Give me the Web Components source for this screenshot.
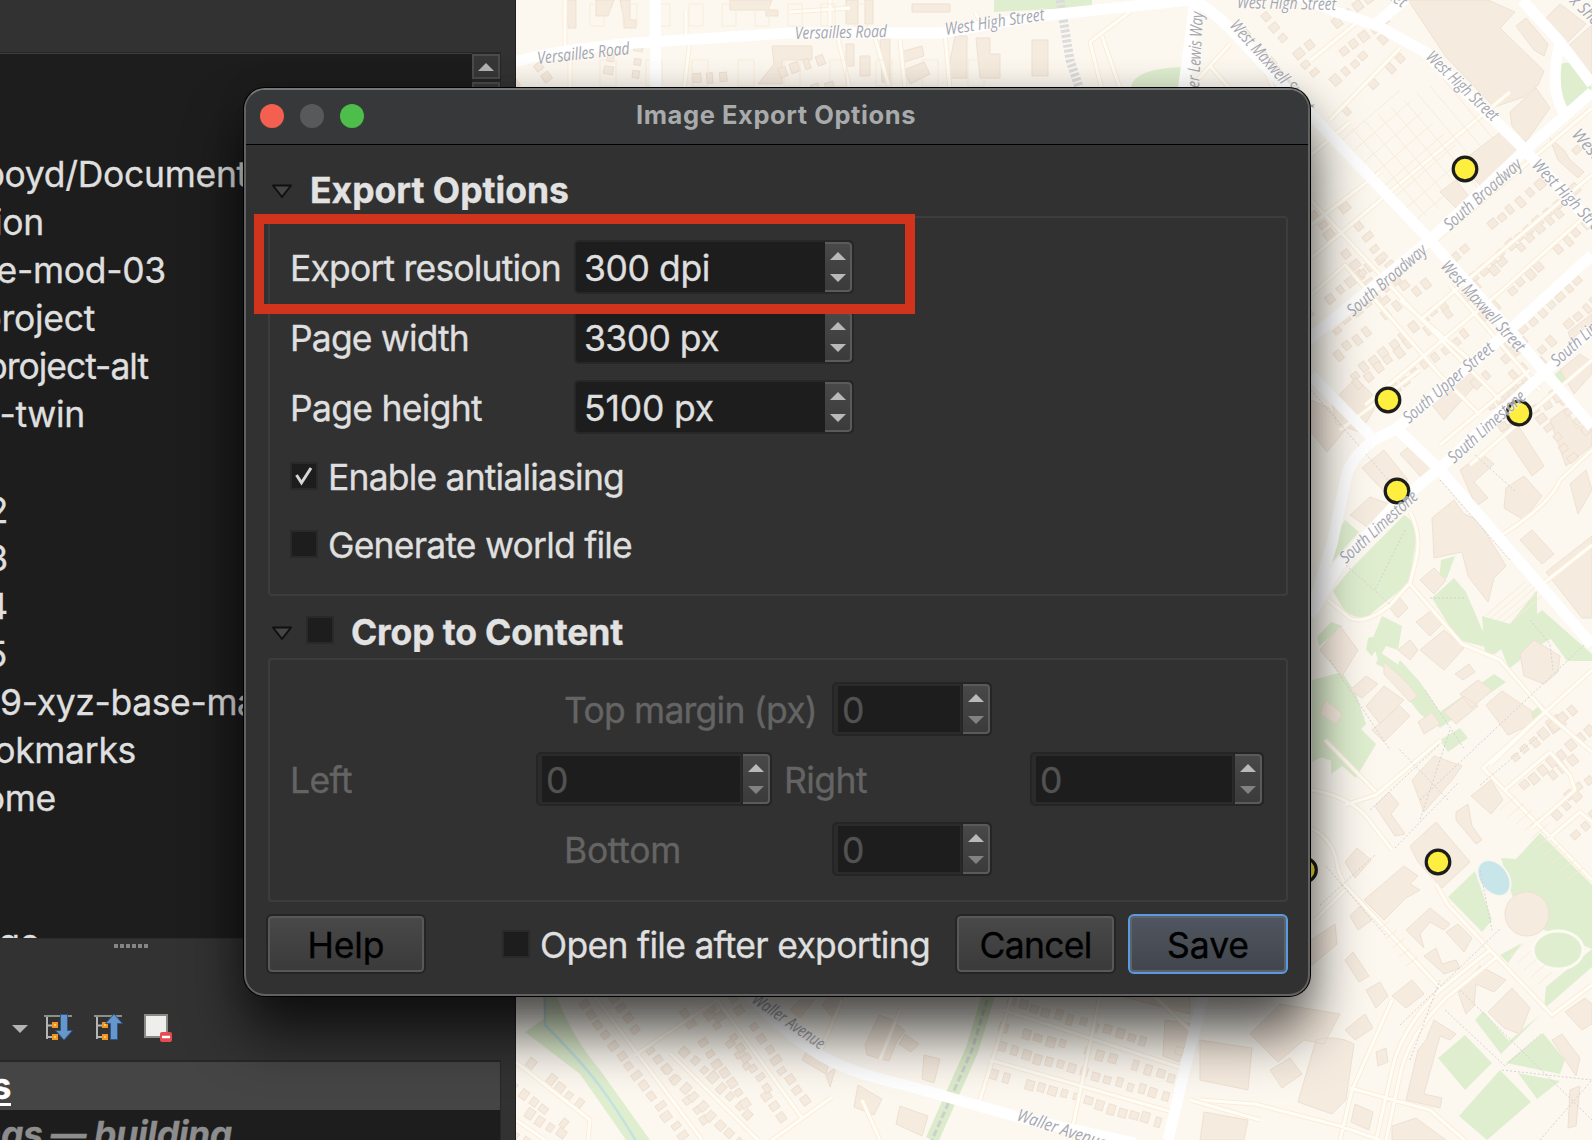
<!DOCTYPE html>
<html lang="en">
<head>
<meta charset="utf-8">
<title>Image Export Options</title>
<style>
  html, body { margin: 0; height: 100%; }
  body { width: 1592px; height: 1140px; overflow: hidden; display: flex; position: relative;
    background: #323232; font-family: Inter, "Liberation Sans", sans-serif; font-size: 35.5px; color: #dfdfdf; }
</style>
</head>
<body>
<side-panel></side-panel>
<street-map></street-map>
<export-dialog></export-dialog>
<script>
const define = (name, html, setup) => customElements.define(name, class extends HTMLElement {
  connectedCallback() {
    if (this.shadowRoot) return;
    const root = this.attachShadow({ mode: 'open' });
    root.innerHTML = html;
    if (setup) setup.call(this, root);
  }
});

/* Text run tracked out or in to a given advance width (attribute w) */
define('fit-text', `<style>
  :host { display: inline-block; white-space: pre; line-height: 44px; padding-top: 4px; flex: none; letter-spacing: -.3px;
    -webkit-text-stroke: .35px currentColor; }
</style><span><slot></slot></span>`, function (root) {
  const w = +this.getAttribute('w'), n = this.textContent.length;
  if (!w) return;
  const span = root.querySelector('span');
  span.style.letterSpacing = '0px';
  span.style.letterSpacing = ((w - span.getBoundingClientRect().width) / n).toFixed(3) + 'px';
});

define('check-box', `<style>
  :host { display: block; box-sizing: border-box; width: 28px; height: 28px; flex: none;
    background: #1d1d1d; border: 2px solid #292929; }
  svg { display: none; width: 24px; height: 24px; }
  :host([checked]) svg { display: block; }
</style><svg viewBox="0 0 24 24"><path d="M4.5 11l5 7.8L19 4" fill="none" stroke="#d6d6d6" stroke-width="3"/></svg>`);

define('spin-box', `<style>
  :host { display: flex; box-sizing: border-box; height: 54px; width: 280px; flex: none;
    border: 2px solid #272727; border-radius: 5px; background: #1d1d1d; overflow: hidden; }
  .value { flex: 1; display: flex; align-items: center; padding-left: 8px; }
  .steps { width: 27px; box-sizing: border-box; display: flex; flex-direction: column; align-items: center;
    justify-content: center; gap: 14px; background: linear-gradient(#484848,#3b3b3b);
    border: 2px solid #5a5a5a; border-left: 0; border-radius: 0 4px 4px 0; }
  svg { display: block; width: 16px; height: 8px; }
  :host([disabled]) { height: 54px; color: #525252; background: #2b2b2b; border-color: #252525; }
  :host([disabled]) .value { margin: 2px 3px 2px 4px; background: #1d1d1d; padding-left: 4px; border: 0; }
  :host([disabled]) .steps { border-left: 0; box-shadow: -2px 0 #262626; }
  :host([disabled]) .down { opacity: .55; }
</style>
<div class="value"><slot></slot></div>
<div class="steps"><svg viewBox="0 0 16 8"><path d="M0 8L8 0l8 8z" fill="#b9b9b9"/></svg>
<svg class="down" viewBox="0 0 16 8"><path d="M0 0h16L8 8z" fill="#b9b9b9"/></svg></div>`);

define('push-button', `<style>
  :host { display: flex; box-sizing: border-box; height: 60px; align-items: center; justify-content: center;
    flex: none; color: #000; border: 2px solid #252525; border-radius: 6px;
    box-shadow: inset 0 0 0 2px #585858; background: linear-gradient(#494949,#3a3a3a); }
  :host([primary]) { border-color: #5b9ade; background: linear-gradient(#505660,#41454d); box-shadow: inset 0 0 0 2px #5d636c; }
</style><slot></slot>`);

define('disclosure-arrow', `<style>:host { display: block; width: 22px; height: 15px; flex: none; } svg { display: block; }</style>
<svg width="22" height="15" viewBox="0 0 22 15"><path d="M2 1.5h18L11 13z" fill="#454545" stroke="#101010" stroke-width="2" stroke-linejoin="round"/></svg>`);

define('group-box', `<style>
  :host { display: flex; flex-direction: column; box-sizing: border-box; border: 2px solid #3d3d3d;
    border-radius: 4px; padding: 22px 20px 0; }
</style><slot></slot>`);

define('export-dialog', `<style>
  :host { position: absolute; left: 244px; top: 88px; width: 1066px; height: 908px; box-sizing: border-box;
    display: flex; flex-direction: column; background: #313131; border: 2px solid #616161; border-top-color: #767878;
    border-radius: 21px; box-shadow: 0 0 0 1px #000, 0 36px 56px rgba(0,0,0,.7), 0 0 30px rgba(0,0,0,.12); }
  header { height: 54px; display: flex; align-items: center; border-bottom: 1px solid #000; flex: none;
    background: #363839; border-radius: 19px 19px 0 0; }
  .lights { display: flex; gap: 16px; padding-left: 14px; width: 378px; box-sizing: border-box; margin-top: -2px; }
  .lights i { width: 24px; height: 24px; border-radius: 50%; flex: none; }
  header fit-text { font-size: 25.5px; font-weight: 700; color: #a9aaab; margin-top: -9px; -webkit-text-stroke: 0; }
  main { display: flex; flex-direction: column; padding: 0 20px 0 22px; }
  h2 { margin: 0; font-size: 35.5px; font-weight: 700; display: flex; align-items: center; padding-left: 3px; color: #e2e2e2; }
  h2 disclosure-arrow { margin-top: 2px; }
  .row { display: flex; align-items: center; height: 52px; }
  .check { display: flex; align-items: center; height: 28px; gap: 10px; }
  .off { height: 54px; color: #646464; }
  .off + .off { margin-top: 16px; }
  footer { display: flex; align-items: center; margin-top: 12px; height: 60px; margin-left: -2px; }
  .mark { position: absolute; left: 8px; top: 124px; width: 661px; height: 100px; box-sizing: border-box; border: 10px solid #d1341c; }
</style>
<header><div class="lights"><i style="background:#f4604f"></i><i style="background:#58595b"></i><i style="background:#4ebe4a"></i></div>
<fit-text w="280" style="padding-left:12px">Image Export Options</fit-text></header>
<main>
  <h2 style="margin-top:28px;height:35px"><disclosure-arrow></disclosure-arrow><fit-text w="259" style="margin:-3px 0 0 17px">Export Options</fit-text></h2>
  <group-box style="height:380px;margin-top:8px">
    <div class="row" style="margin-top:1px"><fit-text w="271" style="margin-right:13px">Export resolution</fit-text><spin-box><fit-text w="126">300 dpi</fit-text></spin-box></div>
    <div class="row" style="margin-top:18px"><fit-text w="179" style="margin-right:105px">Page width</fit-text><spin-box><fit-text w="135">3300 px</fit-text></spin-box></div>
    <div class="row" style="margin-top:18px"><fit-text w="192" style="margin-right:92px">Page height</fit-text><spin-box><fit-text w="130">5100 px</fit-text></spin-box></div>
    <div class="check" style="margin-top:29px"><check-box checked></check-box><fit-text w="296">Enable antialiasing</fit-text></div>
    <div class="check" style="margin-top:40px"><check-box></check-box><fit-text w="304">Generate world file</fit-text></div>
  </group-box>
  <h2 style="margin-top:20px;height:28px"><disclosure-arrow style="margin-top:6px"></disclosure-arrow><check-box style="margin-left:13px"></check-box><fit-text w="272" style="margin-left:17px;padding-top:5px">Crop to Content</fit-text></h2>
  <group-box style="height:244px;margin-top:14px">
    <div class="row off"><fit-text w="253" style="margin:0 15px 0 274px">Top margin (px)</fit-text><spin-box disabled style="width:160px"><fit-text>0</fit-text></spin-box></div>
    <div class="row off"><fit-text w="62" style="margin-right:184px">Left</fit-text><spin-box disabled style="width:236px"><fit-text>0</fit-text></spin-box>
      <fit-text w="83" style="margin:0 163px 0 12px">Right</fit-text><spin-box disabled style="width:234px"><fit-text>0</fit-text></spin-box></div>
    <div class="row off"><fit-text w="117" style="margin:0 151px 0 274px">Bottom</fit-text><spin-box disabled style="width:160px"><fit-text>0</fit-text></spin-box></div>
  </group-box>
  <footer><push-button style="width:160px"><fit-text w="77">Help</fit-text></push-button>
    <check-box style="margin-left:76px"></check-box><fit-text w="390" style="margin-left:10px;margin-right:25px">Open file after exporting</fit-text>
    <push-button style="width:161px"><fit-text w="112">Cancel</fit-text></push-button>
    <push-button primary style="width:160px;margin-left:12px"><fit-text w="82">Save</fit-text></push-button></footer>
</main>
<div class="mark"></div>`);

/* Tree row: text is right-aligned to its visible end, the start runs off the panel */
define('tree-row', `<style>:host { display: flex; justify-content: flex-end; align-items: center; height: 48px; flex: none; }</style><slot></slot>`);

define('side-panel', `<style>
  :host { display: flex; flex-direction: column; width: 516px; height: 1140px; flex: none; box-sizing: border-box;
    border-right: 1px solid #1f1f1f; overflow: hidden; background: #323232; }
  .browser { margin-top: 52px; height: 887px; width: 501px; box-sizing: border-box; border: 1px solid #272727; border-left: 0;
    border-bottom-color: #2c2c2c; background: #1d1d1d; display: flex; justify-content: space-between; overflow: hidden; flex: none; box-shadow: inset 0 1px #3c3c3c; }
  .tree { display: flex; flex-direction: column; align-items: flex-start; padding-top: 96px; width: 0; }
  .bar { width: 28px; display: flex; flex-direction: column; gap: 3px; background: #262626; padding-top: 1px; }
  .bar div { height: 25px; box-sizing: border-box; border: 2px solid #4b4b4b; background: #373737; display: flex; align-items: center; justify-content: center; flex: none; }
  .grip { display: flex; gap: 2px; padding: 5px 0 0 114px; height: 4px; flex: none; }
  .grip i { width: 4px; height: 4px; background: #858585; }
  .tools { display: flex; align-items: flex-start; padding: 63px 0 0 12px; height: 49px; flex: none; }
  .tools svg { display: block; flex: none; }
  .layers { width: 501px; flex: 1; box-sizing: border-box; background: #1d1d1d; border-top: 2px solid #272727; border-right: 1px solid #272727; overflow: hidden; }
  .sel { background: #454545; color: #fff; font-weight: 700; height: 48px; display: flex; }
  .sel fit-text { height: 40px; line-height: 42px; padding-top: 0; box-sizing: border-box; border-bottom: 3px solid #fff; margin-top: -2px; }
  .sel tree-row { height: 50px; }
</style>
<div class="browser"><div class="tree">
  <tree-row style="width:266px"><fit-text>boyd/Documents</fit-text></tree-row>
  <tree-row style="width:44px"><fit-text>ion</fit-text></tree-row>
  <tree-row style="width:166px"><fit-text>e-mod-03</fit-text></tree-row>
  <tree-row style="width:95px"><fit-text>project</fit-text></tree-row>
  <tree-row style="width:148px"><fit-text w="162">project-alt</fit-text></tree-row>
  <tree-row style="width:85px"><fit-text>-twin</fit-text></tree-row>
  <tree-row style="width:0"></tree-row>
  <tree-row style="width:8px"><fit-text>2</fit-text></tree-row>
  <tree-row style="width:8px"><fit-text>3</fit-text></tree-row>
  <tree-row style="width:8px"><fit-text>4</fit-text></tree-row>
  <tree-row style="width:7px"><fit-text>5</fit-text></tree-row>
  <tree-row style="width:278px"><fit-text w="278">9-xyz-base-map</fit-text></tree-row>
  <tree-row style="width:136px"><fit-text>okmarks</fit-text></tree-row>
  <tree-row style="width:56px"><fit-text>ome</fit-text></tree-row>
  <tree-row style="width:0"></tree-row>
  <tree-row style="width:0"></tree-row>
  <tree-row style="width:40px"><fit-text>ge</fit-text></tree-row>
</div>
<div class="bar"><div><svg width="16" height="8" viewBox="0 0 16 8"><path d="M0 8L8 0l8 8z" fill="#b4b4b4"/></svg></div><div style="height:60px"></div></div></div>
<div class="grip"><i></i><i></i><i></i><i></i><i></i><i></i></div>
<div class="tools">
  <svg width="16" height="32" viewBox="0 0 16 32"><path d="M0 14h16l-8 8z" fill="#b4b4b4"/></svg>
  <svg width="32" height="32" viewBox="0 0 32 32" style="margin-left:16px"><path d="M0 5h28" stroke="#8b8f88" stroke-width="2"/><path d="M3 6v22M3 14.500h6M3 26h6" stroke="#b5b5b5" stroke-width="2" fill="none"/><path d="M8 11h6v6H8zM8 23h6v6H8z" fill="#f29424"/><path d="M10 13h2v2h-2zM10 25h2v2h-2z" fill="#ffd34e"/><path d="M16.500 3.500h7v16h5L20 29l-8.500-9.500h5z" fill="#6796cb" stroke="#2f5687"/></svg>
  <svg width="32" height="32" viewBox="0 0 32 32" style="margin-left:18px"><path d="M0 5h28" stroke="#8b8f88" stroke-width="2"/><path d="M3 6v22M3 14.500h6M3 26h6" stroke="#b5b5b5" stroke-width="2" fill="none"/><path d="M8 11h6v6H8zM8 23h6v6H8z" fill="#f29424"/><path d="M10 13h2v2h-2zM10 25h2v2h-2z" fill="#ffd34e"/><path d="M16.500 28.500h7v-16h5L20 3l-8.500 9.500h5z" fill="#6796cb" stroke="#2f5687"/></svg>
  <svg width="32" height="32" viewBox="0 0 32 32" style="margin-left:18px"><path d="M1 4h22v22H1z" fill="#eeeeec" stroke="#888a85" stroke-width="2"/><rect x="16" y="21" width="12" height="10" rx="2" fill="#e54b50"/><path d="M18 26h8" stroke="#fff" stroke-width="2.500"/></svg>
</div>
<div class="layers">
  <div class="sel"><tree-row style="width:11px"><fit-text>s</fit-text></tree-row></div>
  <tree-row style="width:232px;height:46px;color:#8d8d8d;font-weight:700;font-style:italic"><fit-text>ngs — building</fit-text></tree-row>
</div>`);

define('street-map', `<style>:host { display: block; width: 1076px; height: 1140px; flex: none; } svg { display: block; }
  .g { fill: #dfeecf; } .b, .h { fill: #f6ebdf; stroke: #efe1d2; stroke-width: 1; }
  .r { fill: none; stroke: #fff; stroke-width: 11; stroke-linejoin: round; }
  .c { fill: none; stroke: #fbedd6; stroke-width: 5; stroke-linejoin: round; } .m { fill: none; stroke: #fffdf8; stroke-width: 3; stroke-linejoin: round; }
  .d { fill: none; stroke: #d4d2d2; stroke-width: 1; stroke-dasharray: 2 2; }
  .l { fill: none; stroke: #f8ecd9; stroke-width: 1; }
  text { font: italic 17px "Open Sans", "Noto Sans", sans-serif; fill: #a3a7b1; stroke: #fffdfa; stroke-width: 2; paint-order: stroke; stroke-opacity: .6; }
</style>
<svg width="1076" height="1140" viewBox="516 0 1076 1140">
<rect x="516" width="1076" height="1140" fill="#fcf8f0"/>
<g class="g">
 <path d="M994 0h98v7l-98 5zM1131 87q3-18 50-20v20z"/>
 <path d="M1561 64q9-4 17 4l14 20-26 24q-12-24-5-48zM1553 376l9-8 7 9-10 8z"/>
 <path d="M1345 520l14 12-20 22-10 12 8-34zM1404 515q14 8 12 26l-7 42-42 34q-18 2-26-12l-8-14 14-18zM1317 637l14-15 12 4-24 20z"/>
 <path d="M1441 560l14-4-8 22-8 2zM1432 598l22-20 12 14 24 56-32-8zM1482 616l28 8 27-34v32l-42 32h-10zM1500 646l42-36 50 44v7h-25l-16-22-15 8-27 22zM1518 722l24-18 4 6-20 16z"/>
 <path d="M1368 638q12-4 12 6l-8 12-6-6zM1382 616l20 10-4 24-12-4-8 14-6-20zM1312 680l30-8 14 22 10 30-14 14-20-16-20-4zM1400 660l20 22 20 30 54-38 12 8-66 46-20-14-28-36zM1380 652l20 14-4 8-20-10zM1312 712l40 8 24 24-20 34-16-14-28-10z"/>
 <path d="M1312 740l30 14 20-10-8 30-22-22-20 10zM1440 740l20-12 8 10-20 14z"/>
 <path d="M1448 897l27-26 17 49-10 12zM1501 858l15 1 24-26 52 52v82l-48 42 2-22 46-38-60-24-20-30zM1500 955l22-12-14 20z"/>
 <path d="M1483 1011l26 30 32-27-40 40-26-34zM1438 1058l27-23 27 28-27 27zM1506 1063l37-30 22 27-5 14zM1518 1073l42 8-23 18zM1500 1070l31 32-44 38-28-24z"/>
 <path d="M543 997l14-1q14 40 43 74l50 70h-24l-46-66-55-42 20-14zM1331 760l10-4 4 8-14 10z"/>
</g>
<path d="M990 990L972 1050 932 1140" fill="none" stroke="#dcebcb" stroke-width="13"/>
<path d="M545 995v30q36 36 54 60t37 56" fill="none" stroke="#c3e2e0" stroke-width="2.500"/>
<g class="b">
 <path d="M1408 0h80l27 12-15 16 44 43-6 14-14 12-30 10-48-50zM1516 26l10-8 22 26-4 12-10-6zM1510 112l26-24 14 20-24 34-14-16zM1542 22l18-18 26 20-20 20zM1569 45l23-20v60z"/>
 <path d="M1470 155l32-24 20 20-40 36-14-14zM1440 192l16-12 14 18-8 16zM1550 138l14 12 6 10 14 12-6 6-20-18-4-10zM1560 370l20-16 12 8v12l-18 20z"/>
 <path d="M1428 400l36-34 16 14-36 40zM1568 332l24-18v18l-18 16zM1332 402l24-24 18 18v14l-14 22-24-8zM1311 400l18 8 16 22-18 22-16-20zM1362 468l22-18 24 30-16 20zM1400 454l12-10 20 24-10 10z"/>
 <path d="M1350 515l20-18 22 8-22 24zM1432 518l22-18 10 14 14 6 28 46-12 12-6 24-20-26-6-24-28 6zM1460 470l22-16 12 10-20 18 14 16-12 8zM1500 428l16-6 28 44-12 10zM1506 488l18-12 18 20-18 24-20-12zM1550 420l16-12 10 20 16-8v26l-26 20zM1570 484l16-14 6 20-14 24zM1520 540l12-10 22 24-12 10zM1546 572l46-36v82h-10z"/>
 <path d="M1420 580l14-12 12 12-12 14zM1388 606l12-8 8 10-10 10zM1416 622l16-12 12 12-14 14zM1320 650l20-24 18 24-16 26zM1420 650l24-20 20 18-20 22zM1398 650l12-10 8 10-8 10zM1455 674l14-10 6 8-12 8zM1520 654l14-14 26 16-2 16-14 12-20-8zM1350 690l16-14 12 8-16 14zM1384 662l20 18 14 16-8 6-26-28zM1460 694l18-14 14 10-20 18zM1486 705l16-14 30 20 2 12-26 12zM1366 706l18-20 20 14-24 24zM1444 712l20-16 14 10-22 18zM1372 730l28-24 10 10-26 26zM1418 722l14-10 8 12-16 10zM1326 700l16 14-6 10-16-10zM1545 722l12-8 10 10-14 10z"/>
 <path d="M1412 780l22-24 28 10-10 14-28 32zM1471 796l20-16 12 20-12 14zM1456 812l12-8 4 22 10 14-6 4-20-24zM1375 806l14-14 10 12-8 10 14 20-10 2zM1410 846l26-24 34 40-28 26-24-26zM1364 900l40-34 14 10-8 8 10 6-14 8-22 22zM1345 862l12-14 14 12-16 18zM1350 916l10-10 12 14-14 10zM1406 930l24-22 20 16-6 6-14-8-10 12 4 14zM1424 956l12-8 6 16 14-4 4 8-16 6zM1446 932l12-8 14 14-8 14zM1345 960l8-8 16 24-10 6zM1392 996l20-16 12 14-18 14zM1366 990l14-8 8 14-12 12zM1458 992l22-26 26 14-12 12-18-8-2 22-8 8zM1488 1012l24-24 18 20-10 26-16-6zM1565 1012l20-14 7 6v20l-10 6zM1311 940l24-16 2 20-26 22zM1552 1040l10-6 18 24-4 18zM1570 1090l10-4-4 40-8 2z"/>
 <path d="M1426 1040l8-20 22 14-6 6-10-4-16 58 18 4-2 10-34-8 12-50zM1316 1040q20-6 38 4l-8 56-14 14-34-12zM1250 1034l30-30 60 10-16 30-20-4-26 22zM1200 1040l52 8-4 42-48-10zM1204 1112l44 8-4 20h-44zM1355 1104l18 8-4 18-18-8zM1392 1126l24-8 30 22h-54zM1270 1070l20-12 12 16-20 14zM1376 1052l10-4 2 14-10 4zM1345 1030l20-16 8 14-18 12z"/>
 <path d="M620 0h10v20h6v8h-12v-8zM596 0h18l-6 16h-12zM566 0h10v28h-8zM730 0h42l-4 10h10v6h-12v-6h-36zM846 0h12v24h-12zM865 0h8v24h-8zM772 46h40v14h-30v24h-24l16-20zM912 4h38v8h-38zM976 38h14v16h10v24h-20zM955 36h12v42h-20l4-22zM1032 40h16v36h-16zM880 40l10-2v44h-8zM904 70l20-8 6 12-20 10zM900 52l22-6 2 10-20 6zM846 44h8v22h-8zM860 56h10v20h-10z"/>
 <path d="M865 1045l14-30 12 4 14 12-8 10-8 20-22-6zM800 1000h14l-14 18-10-8zM822 1005l14-14 8 6-12 20zM905 1034l14 10-8 8-12-8zM806 1052l22 14-2 8-24-14zM924 1055l16 4-6 24-12-4zM826 1075l10-8-6 20zM858 1085l24 14-8 16-20-8zM900 1106l28 10-6 20-26-12zM1165 1020l28 4-14 38-16-6zM1130 992h60v22l-70-18z"/>
</g>
<circle cx="1527" cy="914" r="22" class="b"/><ellipse cx="1558" cy="950" rx="25" ry="19" fill="#dfeecf" stroke="#fdfaf3" stroke-width="3"/>
<ellipse cx="1494" cy="878" rx="14" ry="20" transform="rotate(-38 1494 878)" fill="#c8e6ea" stroke="#f9f6f0" stroke-width="2"/>
<g id="houses"></g>
<g id="minor"></g>
<g class="d"><path d="M1311 390l90 105M1440 480l70 80M1475 455l40 36M1370 810l70-66M1395 848l64-66M1420 800l180-170M1450 730l-30 90M1385 935l-60-70M1400 1025l100-96M1460 990l132 130M1540 1140l52-60M1410 1060l30-80M1448 800l-50-52M1340 560l50 44M1480 520l60 60M1540 735l-60 50M1320 905l55-50M1480 870l12 60M1502 1070l90 10M1445 1010l60 56 36-32M1425 690l40 60M1330 660l60 90M1530 620l20 24 3 26M1405 530l-30 60M1430 598h35"/></g>
<path d="M1060 0l10 60 10 30" fill="none" stroke="#dcdcdc" stroke-width="9" stroke-dasharray="3 2"/>
<path d="M990 990L972 1050 932 1140" fill="none" stroke="#cfd0ce" stroke-width="3" stroke-dasharray="7 3"/>
<g class="r">
 <path d="M510 63q60-16 140-21t140-9h150l100-17 150-16M655 0l1 100M1182 100L1195 0M1190 0q20 4 60 50l62 66 118 124 115 132 47 55M1296-6l40 18 42 14 47 26 100 98 67 74M1376 24l30-26M1592 92l-26 23-41 35-95 90-90 74-32 26M1522 0l38 42 32 42M1560 42q-12 50 6 73M1592 255l-92 84-104 90-22 11q-24 18-28 38l-14 66-22 72M1311 375l64 66M1396 428l44 42 152 175M1592 330l-47 42-105 96-44 36-58 62-28 50"/>
 <path d="M745 990q40 44 75 65 30 18 85 30l120 34 110 24M1205 990l-18 70-19 80"/>
</g>
<g id="pins" fill="#fdee3f" stroke="#1d1d1b" stroke-width="3.200"></g>
<g id="labels"></g>
</svg>`, function (root) {
  const ns = 'http://www.w3.org/2000/svg';
  let seed = 7;
  const rnd = () => (seed = (seed * 16807) % 2147483647) / 2147483647;
  const add = (parent, tag, attrs, text) => {
    const e = document.createElementNS(ns, tag);
    for (const k in attrs) e.setAttribute(k, attrs[k]);
    if (text) e.textContent = text;
    parent.appendChild(e);
  };
  const houses = root.getElementById('houses'), minor = root.getElementById('minor');

  /* Rows of small houses along both sides of a street: x0, y0, x1, y1, offset */
  const row = (x0, y0, x1, y1, off = 12, s = 8) => {
    const len = Math.hypot(x1 - x0, y1 - y0), a = Math.atan2(y1 - y0, x1 - x0);
    for (let t = s; t < len - s / 2; t += s + 3 + rnd() * 3) for (const side of [-1, 1]) {
      if (rnd() < .12) continue;
      const o = side * (off + rnd() * 3), w = s * (.7 + rnd() * .4), h = s * (.8 + rnd() * .5);
      const cx = x0 + Math.cos(a) * t - Math.sin(a) * o, cy = y0 + Math.sin(a) * t + Math.cos(a) * o;
      add(houses, 'rect', { class: 'h', x: -w / 2, y: -h / 2, width: w, height: h,
        transform: `translate(${cx.toFixed(1)} ${cy.toFixed(1)}) rotate(${(a * 57.3).toFixed(1)})` });
    }
  };
  [[590,990,702,1140],[670,1055,755,1140],[717,1000,800,1118],[516,1070,580,1120],[1000,1012,1180,1066],[990,1058,1170,1112],
   [516,1120,560,1150],[690,1000,760,1100],[1311,60,1390,0],[1330,105,1395,45],[1592,155,1450,280],[1592,200,1470,310],
   [1592,285,1490,378],[1311,330,1400,260],[1340,370,1440,290],[1360,400,1460,320],[1480,400,1540,345],[1320,200,1400,300],
   [1250,20,1311,90],[1555,790,1592,760],[1560,830,1592,800],[1510,780,1592,710],[540,92,516,60],[690,92,740,88],
   [620,80,626,40],[780,88,830,70],[1540,395,1592,460],[1490,420,1560,380]].forEach(r => row(...r));

  ['M1311 258L1470 125 1510 92M1311 200L1420 318 1500 400M1330 330L1592 108M1311 295L1345 265 1440 375 1480 415M1420 320L1592 175M1365 405L1500 292 1592 210M1311 225L1380 172M1311 165L1260 60M1311 60L1360 20M1330 120L1400 48M1400 300L1470 360M1450 285L1540 390M1340 430L1420 370M1440 445L1530 370M1311 155L1350 122M1592 360L1470 465',
   'M1592 450L1560 480Q1550 505 1500 536M1592 545L1535 590M1410 512Q1422 535 1416 560L1410 583 1390 605Q1365 625 1350 618L1328 600M1410 584L1462 644 1500 660 1545 712 1592 752M1592 670L1483 768 1592 880M1545 712L1490 765M1441 740L1376 795 1345 805M1311 790Q1345 795 1365 815L1392 850M1311 828Q1335 840 1338 870L1345 885 1442 990M1345 890L1315 920M1376 792L1325 740M1436 884L1448 905 1490 950 1552 1015 1592 985M1490 950L1440 990Q1400 1030 1392 1070L1375 1145M1498 956L1446 998Q1408 1036 1400 1075L1385 1145M1392 1000L1352 1090 1340 1140M1350 1088L1430 1110 1470 1145M1200 1100L1255 1104 1340 1126 1380 1140M1532 828L1575 790 1570 775 1550 752M1547 840L1580 812 1592 822M1505 790L1550 752',
   'M590 990L702 1140M670 1053L758 1140M717 1000L802 1118M635 1055L717 1000M765 1145L832 1097M516 1062L590 1120 588 1140M516 1120L545 1140M1003 1010L1182 1068M990 1060L1172 1112M1100 996L1070 1140M1012 996L980 1100M1150 992L1190 1030M842 1000L820 1052M900 1010L880 1060M862 1100L880 1140M1190 1100L1260 1120',
   'M565 0V62M570 60V90M690 40L684 90M830 0V34M838 38L850 90M875 38L890 90M945 34L950 90M900 40L905 88M975 12L985 30M686 10V36M790 12L850 8M1130 12Q1100 34 1090 42L1102 90M1102 36L1120 88M1230 44L1190 88M1210 66L1240 100'
  ].forEach(d => { add(minor, 'path', { class: 'c', d }); add(minor, 'path', { class: 'm', d }); });

  /* Thin parking-lot outlines */
  let lots = '';
  for (let i = 0; i < 8; i++) lots += `M${1340 + i * 11} ${142 + i * 11}l60-52M${1352 + i * 13} ${128 - i * 7}l74 88`;
  for (let i = 0; i < 5; i++) lots += `M${1485 + i * 6} ${616 + i * 2}l40-34M${1378 + i * 7} ${930 + i * 9}l12-9M${1500 + i * 8} ${810 + i * 7}l16-14M${1535 + i * 8} ${848 + i * 8}l16-12M${1510 + i * 7} ${956 + i * 7}l14-12`;
  for (let i = 0; i < 9; i++) lots += `M${590 + i * 33} 4v22h14v-22zM${600 + i * 46} 60v26h16v-26z`;
  add(minor, 'path', { class: 'l', d: lots });

  const pins = root.getElementById('pins');
  [[1465,169],[1388,400],[1519,413],[1397,491],[1438,862],[1304.500,870]].forEach(([cx, cy]) => add(pins, 'circle', { cx, cy, r: 11.800 }));

  const labels = root.getElementById('labels');
  [['Versailles Road',538,64,630,54],['Versailles Road',795,39,887,37],['West High Street',946,35,1045,20],
   ['West High Street',1237,8,1336,10],['West Maxwell Street',1229,26,1307,113],['er Lewis Way',1199,88,1203,12],['Street',1372,-12,1402,8],
   ['West High Street',1425,58,1492,122],['West High Street',1531,166,1602,240],['South Broadway',1450,231,1523,166],
   ['South Broadway',1353,317,1428,252],['West Maxwell Street',1440,267,1518,353],['South Upper Street',1409,424,1495,350],
   ['South Limestone',1454,464,1527,398],['South Limestone',1346,564,1419,498],['South Limestone',1557,367,1632,300],
   ['West Short',1571,135,1622,193],['x Short',1569,2,1602,34],['Waller Avenue',751,1002,820,1050],['Waller Avenue',1016,1120,1104,1149]
  ].forEach(([t, x0, y0, x1, y1]) => add(labels, 'text', { x: x0, y: y0, textLength: Math.hypot(x1 - x0, y1 - y0).toFixed(1),
    lengthAdjust: 'spacingAndGlyphs', transform: `rotate(${(Math.atan2(y1 - y0, x1 - x0) * 57.296).toFixed(2)} ${x0} ${y0})` }, t));
});
</script>
</body>
</html>
